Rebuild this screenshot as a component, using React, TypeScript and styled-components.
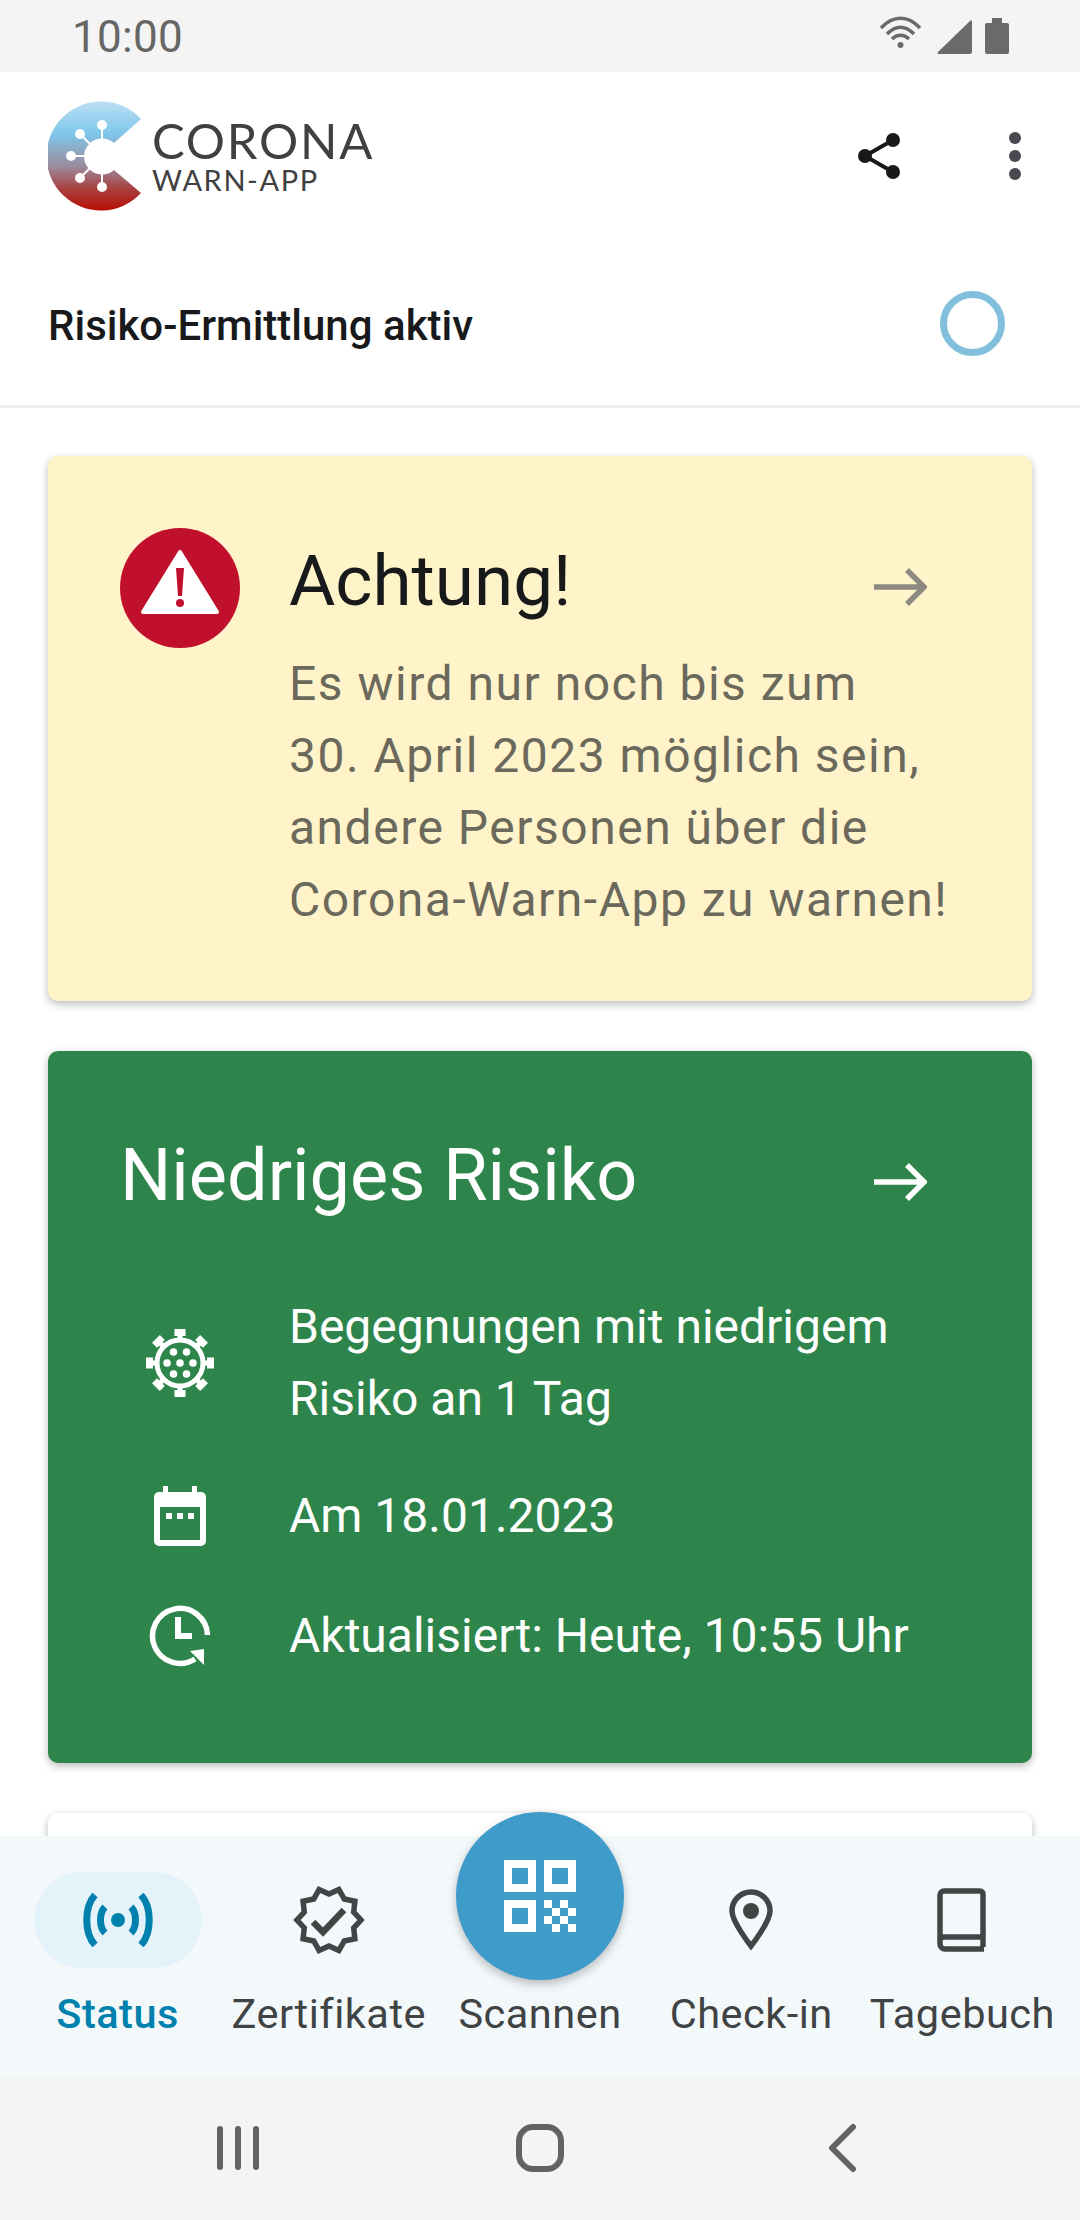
import React from 'react';
import styled, { createGlobalStyle } from 'styled-components';

const GlobalStyle = createGlobalStyle`
  html, body {
    margin: 0;
    padding: 0;
    background: #ffffff;
    font-family: Roboto, 'Liberation Sans', sans-serif;
  }
  * {
    box-sizing: border-box;
  }
`;

const Screen = styled.div`
  width: 1080px;
  height: 2220px;
  display: flex;
  flex-direction: column;
  overflow: hidden;
  background: #ffffff;
`;

const StatusBar = styled.div`
  height: 72px;
  flex-shrink: 0;
  background: #f4f4f4;
  display: flex;
  align-items: center;
  justify-content: space-between;
  padding: 0 71px 0 72px;
`;

const Clock = styled.div`
  font-size: 44px;
  color: #666666;
  letter-spacing: 0.3px;
  margin-top: 2px;
`;

const StatusIcons = styled.svg`
  width: 130px;
  height: 72px;
  display: block;
`;

const Header = styled.div`
  height: 168px;
  flex-shrink: 0;
  display: flex;
  align-items: center;
  justify-content: space-between;
  padding: 0 41px 0 48px;
`;

const Brand = styled.div`
  display: flex;
  align-items: center;
  gap: 8px;
`;

const BrandText = styled.div`
  display: flex;
  flex-direction: column;
  color: #404040;
  font-family: Lato, sans-serif;
`;

const BrandTop = styled.div`
  font-size: 49px;
  line-height: 48px;
  letter-spacing: 1.8px;
`;

const BrandBottom = styled.div`
  font-size: 29px;
  line-height: 32px;
  letter-spacing: 1.6px;
`;

const HeaderActions = styled.svg`
  width: 210px;
  height: 168px;
  display: block;
`;

const RiskRow = styled.div`
  height: 168px;
  flex-shrink: 0;
  display: flex;
  align-items: center;
  justify-content: space-between;
  padding: 0 75px 0 48px;
  border-bottom: 3px solid #eeeeee;
`;

const RiskLabel = styled.div`
  font-size: 42px;
  font-weight: 500;
  color: #17191a;
  margin-top: 5px;
`;

const RiskRing = styled.div`
  width: 65px;
  height: 65px;
  border-radius: 50%;
  border: 7px solid #82bfdb;
  margin-top: 2px;
`;

const Feed = styled.div`
  flex: 1;
  min-height: 0;
  overflow: hidden;
  padding: 48px 48px 0;
  display: flex;
  flex-direction: column;
  gap: 50px;
`;

const Card = styled.div<{ $bg: string; $height: number }>`
  flex-shrink: 0;
  height: ${props => props.$height}px;
  background: ${props => props.$bg};
  border-radius: 10px;
  box-shadow: 0 3px 8px rgba(0, 0, 0, 0.28);
  padding: 72px 62px 0 72px;
`;

const WarningGrid = styled.div`
  display: grid;
  grid-template-columns: 120px 1fr;
  column-gap: 49px;
`;

const TitleRow = styled.div<{ $height: number }>`
  display: flex;
  align-items: center;
  justify-content: space-between;
  height: ${props => props.$height}px;
  padding-right: 43px;
`;

const WarningTitle = styled.div`
  font-size: 71px;
  color: #17191a;
`;

const WarningBody = styled.div`
  margin-top: 16px;
  font-size: 48px;
  line-height: 72px;
  color: #6b685c;
  letter-spacing: 1.5px;
  white-space: nowrap;
`;

const RiskTitle = styled.div`
  font-size: 72px;
  color: #ffffff;
`;

const RiskItem = styled.div<{ $top: number }>`
  display: grid;
  grid-template-columns: 120px 1fr;
  column-gap: 49px;
  align-items: center;
  margin-top: ${props => props.$top}px;
  font-size: 48px;
  line-height: 72px;
  color: #ffffff;
`;

const ItemIcon = styled.svg`
  display: block;
  justify-self: center;
`;

const ArrowIcon = styled.svg<{ $top: number }>`
  display: block;
  margin-top: ${props => props.$top}px;
`;

const BottomNav = styled.div`
  height: 240px;
  flex-shrink: 0;
  background: #f3f8fb;
  display: grid;
  grid-template-columns: repeat(5, 1fr);
  padding: 0 12px;
  position: relative;
`;

const NavItem = styled.div`
  position: relative;
  display: flex;
  flex-direction: column;
  align-items: center;
  padding-top: 36px;
`;

const IconPill = styled.div<{ $active?: boolean }>`
  width: 168px;
  height: 96px;
  border-radius: 48px;
  background: ${props => (props.$active ? '#e4f3fa' : 'transparent')};
  display: flex;
  align-items: center;
  justify-content: center;
`;

const NavLabel = styled.div<{ $active?: boolean }>`
  margin-top: 20px;
  font-size: 41.5px;
  line-height: 52px;
  letter-spacing: 0.5px;
  white-space: nowrap;
  font-weight: ${props => (props.$active ? 500 : 400)};
  color: ${props => (props.$active ? '#0081ad' : '#3f4344')};
`;

const ScanButton = styled.div`
  position: absolute;
  top: -24px;
  left: 50%;
  transform: translateX(-50%);
  width: 168px;
  height: 168px;
  border-radius: 50%;
  background: #3f9bc9;
  box-shadow: 0 4px 10px rgba(0, 0, 0, 0.25);
  display: flex;
  align-items: center;
  justify-content: center;
`;

const SystemNav = styled.div`
  height: 144px;
  flex-shrink: 0;
  background: #f4f4f4;
  display: grid;
  grid-template-columns: repeat(3, 302px);
  justify-content: center;
  align-items: center;
  justify-items: center;
`;

const Arrow = ({ color, top }: { color: string; top: number }) => (
  <ArrowIcon $top={top} width="56" height="40" viewBox="0 0 56 40" fill="none">
    <path d="M3 20H53M36 3L53 20L36 37" stroke={color} strokeWidth="5.5" />
  </ArrowIcon>
);

const Logo = () => (
  <svg width="96" height="112" viewBox="48 100 96 112">
    <defs>
      <linearGradient id="logoFill" x1="0" y1="0" x2="0" y2="1">
        <stop offset="0" stopColor="#bcdff5" />
        <stop offset="0.3" stopColor="#7ec6ea" />
        <stop offset="0.6" stopColor="#9c8a9a" />
        <stop offset="0.8" stopColor="#a8403f" />
        <stop offset="1" stopColor="#b80e05" />
      </linearGradient>
    </defs>
    <path
      d="M141 119A54.5 54.5 0 1 0 141 193L114 170A18 18 0 1 1 114 143Z"
      fill="url(#logoFill)"
    />
    <g stroke="#ffffff" strokeWidth="2" fill="#ffffff">
      <path d="M102 125V140M80 134L91 145M71 156H85M80 178L91 167M102 187V172" fill="none" />
      <circle cx="102" cy="125" r="4" />
      <circle cx="80" cy="134" r="4" />
      <circle cx="71" cy="156" r="4" />
      <circle cx="80" cy="178" r="4" />
      <circle cx="102" cy="187" r="4" />
    </g>
  </svg>
);

const VirusIcon = () => (
  <ItemIcon width="68" height="68" viewBox="-34 -34 68 68" fill="#ffffff">
    <circle cx="0" cy="0" r="23" fill="none" stroke="#ffffff" strokeWidth="5" />
    {[0, 45, 90, 135, 180, 225, 270, 315].map(a => (
      <g key={a} transform={`rotate(${a})`}>
        <rect x="-2.5" y="-28" width="5" height="6" />
        <rect x="-5.5" y="-34" width="11" height="7" />
      </g>
    ))}
    <circle cx="-6.5" cy="-11" r="3.8" />
    <circle cx="6.5" cy="-11" r="3.8" />
    <circle cx="-13" cy="0" r="3.8" />
    <circle cx="0" cy="0" r="3.8" />
    <circle cx="13" cy="0" r="3.8" />
    <circle cx="-6.5" cy="11" r="3.8" />
    <circle cx="6.5" cy="11" r="3.8" />
  </ItemIcon>
);

const CalendarIcon = () => (
  <ItemIcon width="52" height="60" viewBox="0 0 52 60" fill="#ffffff">
    <path
      fillRule="evenodd"
      d="M9 0H14V6H38V0H43V6H47A5 5 0 0 1 52 11V55A5 5 0 0 1 47 60H5A5 5 0 0 1 0 55V11A5 5 0 0 1 5 6H9ZM6 21V54H46V21Z"
    />
    <rect x="12" y="27" width="6" height="6" />
    <rect x="23" y="27" width="6" height="6" />
    <rect x="34" y="27" width="6" height="6" />
  </ItemIcon>
);

const ClockIcon = () => (
  <ItemIcon width="62" height="62" viewBox="0 0 62 62" fill="none">
    <path d="M58.5 30A27.5 27.5 0 1 0 46 54" stroke="#ffffff" strokeWidth="5.5" />
    <path d="M41 46L55 44V60Z" fill="#ffffff" />
    <path d="M29 12V31H43" stroke="#ffffff" strokeWidth="6" />
  </ItemIcon>
);

const BroadcastIcon = () => (
  <svg width="74" height="54" viewBox="0 0 74 54" fill="none">
    <circle cx="37" cy="27" r="7" fill="#0081ad" />
    <path d="M14 2C3 14 3 40 14 52M60 2C71 14 71 40 60 52" stroke="#0081ad" strokeWidth="7" />
    <path d="M24 14C18 20 18 34 24 40M50 14C56 20 56 34 50 40" stroke="#0081ad" strokeWidth="7" />
  </svg>
);

const badgePoints = Array.from({ length: 20 }, (_, i) => {
  const r = i % 2 === 0 ? 32 : 26;
  const a = ((i * 18 - 72) * Math.PI) / 180;
  return `${(36 + r * Math.cos(a)).toFixed(1)},${(36 + r * Math.sin(a)).toFixed(1)}`;
}).join(' ');

const CertificateIcon = () => (
  <svg width="72" height="72" viewBox="0 0 72 72" fill="none">
    <polygon points={badgePoints} stroke="#414546" strokeWidth="5.5" />
    <path d="M20 38L30 48L51 26" stroke="#414546" strokeWidth="6.5" />
  </svg>
);

const PinIcon = () => (
  <svg width="44" height="62" viewBox="0 0 44 62" fill="none">
    <path
      d="M22 57C22 57 3 33 3 22A19 19 0 0 1 41 22C41 33 22 57 22 57Z"
      stroke="#414546"
      strokeWidth="5.5"
    />
    <circle cx="22" cy="22" r="8" fill="#414546" />
  </svg>
);

const BookIcon = () => (
  <svg width="50" height="64" viewBox="0 0 50 64" fill="none">
    <path
      d="M46 47V6A3 3 0 0 0 43 3H7A4 4 0 0 0 3 7V56A5 5 0 0 0 8 61H47"
      stroke="#414546"
      strokeWidth="5.5"
    />
    <path d="M3 51A5 5 0 0 1 8 49H46V59" stroke="#414546" strokeWidth="5.5" />
  </svg>
);

const QrIcon = () => (
  <svg width="72" height="72" viewBox="0 0 72 72" fill="#ffffff">
    <path fillRule="evenodd" d="M0 0H32V32H0ZM8 8V24H24V8Z" />
    <path fillRule="evenodd" d="M40 0H72V32H40ZM48 8V24H64V8Z" />
    <path fillRule="evenodd" d="M0 40H32V72H0ZM8 48V64H24V48Z" />
    <path d="M40 40H48V48H40ZM56 40H64V48H56ZM48 48H56V56H48ZM64 48H72V56H64ZM40 56H48V64H40ZM56 56H64V64H56ZM48 64H56V72H48ZM64 64H72V72H64Z" />
  </svg>
);

const App: React.FC = () => {
  return (
    <Screen>
      <GlobalStyle />
      <StatusBar>
        <Clock>10:00</Clock>
        <StatusIcons viewBox="878 0 130 72">
          <g fill="none" stroke="#6a6a6a" strokeWidth="3.5">
            <path d="M880 28C892 15 907 15 919 28" />
            <path d="M886 34C895 25 904 25 913 34" />
            <path d="M891 39C896 34 903 34 908 39" />
          </g>
          <circle cx="899.5" cy="45" r="3" fill="#6a6a6a" />
          <path d="M937 52L969 21Q971 19 971 22V52Q971 54 969 54H938Q936 54 937 52Z" fill="#6a6a6a" />
          <path d="M991 18H1001V23H1006Q1008 23 1008 25V52Q1008 54 1006 54H986Q984 54 984 52V25Q984 23 986 23H991Z" fill="#6a6a6a" />
        </StatusIcons>
      </StatusBar>
      <Header>
        <Brand>
          <Logo />
          <BrandText>
            <BrandTop>CORONA</BrandTop>
            <BrandBottom>WARN-APP</BrandBottom>
          </BrandText>
        </Brand>
        <HeaderActions viewBox="828 72 210 168">
          <g fill="#17191a" stroke="#17191a" strokeWidth="4">
            <path d="M892 140L864 156L892 172" fill="none" />
            <circle cx="864" cy="156" r="5" />
            <circle cx="892" cy="140" r="5" />
            <circle cx="892" cy="172" r="5" />
          </g>
          <g fill="#4a4850">
            <circle cx="1014" cy="138" r="6" />
            <circle cx="1014" cy="156" r="6" />
            <circle cx="1014" cy="174" r="6" />
          </g>
        </HeaderActions>
      </Header>
      <RiskRow>
        <RiskLabel>Risiko-Ermittlung aktiv</RiskLabel>
        <RiskRing />
      </RiskRow>
      <Feed>
        <Card $bg="#fff3c9" $height={545}>
          <WarningGrid>
            <svg width="120" height="120" viewBox="0 0 120 120">
              <circle cx="60" cy="60" r="60" fill="#c1102e" />
              <path d="M60 24L97 84H23Z" fill="#ffffff" stroke="#ffffff" strokeWidth="4" strokeLinejoin="round" />
              <path d="M56 40H64L62 68H58Z" fill="#c1102e" />
              <circle cx="60" cy="75" r="4" fill="#c1102e" />
            </svg>
            <div>
              <TitleRow $height={104}>
                <WarningTitle>Achtung!</WarningTitle>
                <Arrow color="#8c8a80" top={14} />
              </TitleRow>
              <WarningBody>
                Es wird nur noch bis zum
                <br />
                30. April 2023 möglich sein,
                <br />
                andere Personen über die
                <br />
                Corona-Warn-App zu warnen!
              </WarningBody>
            </div>
          </WarningGrid>
        </Card>
        <Card $bg="#2e854b" $height={712}>
          <TitleRow $height={104}>
            <RiskTitle>Niedriges Risiko</RiskTitle>
            <Arrow color="#ffffff" top={14} />
          </TitleRow>
          <RiskItem $top={64}>
            <VirusIcon />
            <div>
              Begegnungen mit niedrigem
              <br />
              Risiko an 1 Tag
            </div>
          </RiskItem>
          <RiskItem $top={45}>
            <CalendarIcon />
            <div>Am 18.01.2023</div>
          </RiskItem>
          <RiskItem $top={48}>
            <ClockIcon />
            <div>Aktualisiert: Heute, 10:55 Uhr</div>
          </RiskItem>
        </Card>
        <Card $bg="#ffffff" $height={300} />
      </Feed>
      <BottomNav>
        <NavItem>
          <IconPill $active>
            <BroadcastIcon />
          </IconPill>
          <NavLabel $active>Status</NavLabel>
        </NavItem>
        <NavItem>
          <IconPill>
            <CertificateIcon />
          </IconPill>
          <NavLabel>Zertifikate</NavLabel>
        </NavItem>
        <NavItem>
          <ScanButton>
            <QrIcon />
          </ScanButton>
          <IconPill />
          <NavLabel>Scannen</NavLabel>
        </NavItem>
        <NavItem>
          <IconPill>
            <PinIcon />
          </IconPill>
          <NavLabel>Check-in</NavLabel>
        </NavItem>
        <NavItem>
          <IconPill>
            <BookIcon />
          </IconPill>
          <NavLabel>Tagebuch</NavLabel>
        </NavItem>
      </BottomNav>
      <SystemNav>
        <svg width="42" height="48" viewBox="0 0 42 48" fill="#636363">
          <rect x="0" y="2" width="6" height="44" rx="3" />
          <rect x="18" y="2" width="6" height="44" rx="3" />
          <rect x="36" y="2" width="6" height="44" rx="3" />
        </svg>
        <svg width="50" height="50" viewBox="0 0 50 50" fill="none">
          <rect x="4" y="4" width="42" height="42" rx="14" stroke="#636363" strokeWidth="6" />
        </svg>
        <svg width="28" height="50" viewBox="0 0 28 50" fill="none">
          <path d="M25 4L4 25L25 46" stroke="#636363" strokeWidth="6" strokeLinecap="round" strokeLinejoin="round" />
        </svg>
      </SystemNav>
    </Screen>
  );
};

export default App;
